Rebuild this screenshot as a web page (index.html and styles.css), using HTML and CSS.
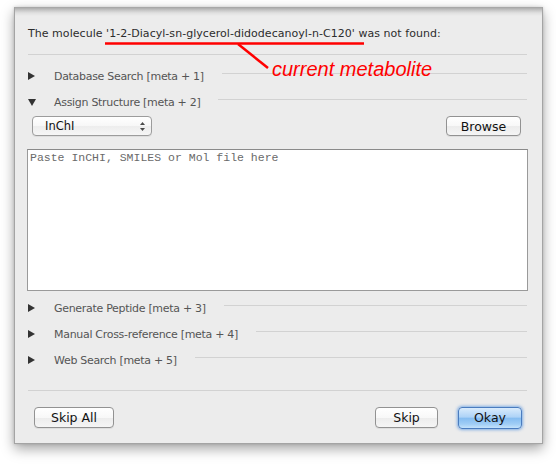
FILE: index.html
```html
<!DOCTYPE html>
<html lang="en">
<head>
<meta charset="utf-8">
<title>Molecule not found</title>
<link rel="stylesheet" href="styles.css">
</head>
<body>
<div class="sheet">
  <p class="msg">The molecule '1-2-Diacyl-sn-glycerol-didodecanoyl-n-C120' was not found:</p>
  <div class="sep sep-top"></div>

  <div class="sections">
    <div class="row">
      <span class="tri"><svg width="7" height="8" viewBox="0 0 7 8"><polygon points="0,0 7,4 0,8" /></svg></span>
      <span class="label">Database Search [meta + 1]</span>
      <span class="rule"></span>
    </div>
    <div class="row">
      <span class="tri"><svg width="8" height="7" viewBox="0 0 8 7"><polygon points="0,0 8,0 4,7" /></svg></span>
      <span class="label">Assign Structure [meta + 2]</span>
      <span class="rule"></span>
    </div>
  </div>

  <div class="tools">
    <div class="combo">
      <span class="combo-text">InChI</span>
      <svg class="combo-arrows" width="5" height="9" viewBox="0 0 5 9"><polygon points="2.5,0 5,3 0,3" /><polygon points="0,6 5,6 2.5,9" /></svg>
    </div>
    <button class="btn browse">Browse</button>
  </div>
  <div class="input">Paste InCHI, SMILES or Mol file here</div>

  <div class="sections lower">
    <div class="row">
      <span class="tri"><svg width="7" height="8" viewBox="0 0 7 8"><polygon points="0,0 7,4 0,8" /></svg></span>
      <span class="label">Generate Peptide [meta + 3]</span>
      <span class="rule"></span>
    </div>
    <div class="row">
      <span class="tri"><svg width="7" height="8" viewBox="0 0 7 8"><polygon points="0,0 7,4 0,8" /></svg></span>
      <span class="label">Manual Cross-reference [meta + 4]</span>
      <span class="rule"></span>
    </div>
    <div class="row">
      <span class="tri"><svg width="7" height="8" viewBox="0 0 7 8"><polygon points="0,0 7,4 0,8" /></svg></span>
      <span class="label">Web Search [meta + 5]</span>
      <span class="rule"></span>
    </div>
  </div>

  <div class="sep sep-bottom"></div>
  <div class="buttons">
    <button class="btn skip-all">Skip All</button>
    <span class="spacer"></span>
    <button class="btn skip">Skip</button>
    <button class="btn okay">Okay</button>
  </div>

  <svg class="annot-lines" width="400" height="70" viewBox="0 0 400 70">
    <line x1="90" y1="36.5" x2="349" y2="36.5" />
    <line x1="223" y1="37" x2="253" y2="61" />
  </svg>
  <span class="annot-text">current metabolite</span>
</div>
</body>
</html>
```

FILE: styles.css
```css
html, body {
  margin: 0;
  padding: 0;
  background: #ffffff;
}

body {
  width: 556px;
  height: 464px;
  overflow: hidden;
  font-family: "DejaVu Sans", "Liberation Sans", sans-serif;
}

.sheet {
  position: relative;
  box-sizing: border-box;
  width: 529px;
  height: 437px;
  margin: 7px 0 0 14px;
  padding: 19px 15px 15px 13px;
  border: 1px solid #a4a4a4;
  border-top: none;
  background: linear-gradient(to bottom, #a2a2a2 0, #c4c4c4 3px, #e0e0e0 6px, #ececec 9px, #ececec 100%);
  box-shadow: 0 5px 12px rgba(0, 0, 0, 0.35), 0 0 3px rgba(0, 0, 0, 0.15);
}

.msg {
  margin: 0;
  font-size: 11px;
  line-height: 16px;
  letter-spacing: 0.04px;
  color: #2c2c2c;
  white-space: nowrap;
}

.sep {
  height: 1px;
  background: #d2d2d2;
}

.sep-top {
  margin-top: 12px;
}

.sections {
  margin-top: 8px;
}

.sections.lower {
  margin-top: 4px;
}

.row {
  display: flex;
  align-items: center;
  height: 26px;
}

.tri {
  width: 26px;
  display: flex;
  align-items: center;
}

.tri svg {
  display: block;
  fill: #333333;
}

.label {
  font-size: 11px;
  letter-spacing: -0.3px;
  color: #555555;
  white-space: nowrap;
}

.rule {
  flex: 1;
  height: 1px;
  margin: 0 0 6px 18px;
  background: #d2d2d2;
}

.tools {
  display: flex;
  justify-content: space-between;
  align-items: center;
  margin-top: 1px;
  height: 20px;
  padding: 0 6px 0 4px;
}

.combo {
  box-sizing: border-box;
  width: 120px;
  height: 20px;
  display: flex;
  align-items: center;
  justify-content: space-between;
  padding: 0 6px 0 12px;
  border: 1px solid #9c9c9c;
  border-radius: 4px;
  background: linear-gradient(to bottom, #ffffff 0, #f7f7f7 50%, #ededed 51%, #f6f6f6 100%);
  box-shadow: 0 1px 0 rgba(0, 0, 0, 0.06);
}

.combo-text {
  font-size: 11.5px;
  color: #111111;
}

.combo-arrows {
  display: block;
  fill: #4a4a4a;
}

.btn {
  box-sizing: border-box;
  height: 21px;
  padding: 0;
  font-family: "DejaVu Sans", "Liberation Sans", sans-serif;
  font-size: 12.5px;
  color: #111111;
  border: 1px solid #929292;
  border-radius: 4px;
  background: linear-gradient(to bottom, #ffffff 0, #f8f8f8 50%, #ececec 51%, #f5f5f5 100%);
  box-shadow: 0 1px 0 rgba(0, 0, 0, 0.06);
}

.browse {
  width: 75px;
  height: 20px;
}

.input {
  box-sizing: border-box;
  height: 142px;
  margin: 13px -1px 0 -1px;
  padding: 1px 2px;
  border: 1px solid #9a9a9a;
  border-top-color: #8a8a8a;
  background: #ffffff;
  font-family: "Liberation Mono", "DejaVu Sans Mono", monospace;
  font-size: 11.5px;
  line-height: 14px;
  color: #6a6a6a;
  white-space: nowrap;
}

.sep-bottom {
  margin-top: 17px;
}

.buttons {
  display: flex;
  align-items: center;
  margin-top: 16px;
  height: 21px;
  padding: 0 5px 0 6px;
}

.spacer {
  flex: 1;
}

.skip-all {
  width: 80px;
}

.skip {
  width: 63px;
  margin-right: 20px;
}

.okay {
  width: 64px;
  height: 22px;
  border-color: #4a7cbf;
  background: linear-gradient(to bottom, #d9ebfc 0, #aed3f7 45%, #86bdf1 52%, #9fcdf6 80%, #c4e3fc 100%);
  box-shadow: 0 0 3px 1px rgba(70, 140, 225, 0.65);
}

.annot-lines {
  position: absolute;
  left: 0;
  top: 0;
  stroke: #ff0000;
  stroke-width: 2.5;
  pointer-events: none;
}

.annot-text {
  position: absolute;
  left: 257px;
  top: 52px;
  font-family: "Liberation Sans", Arial, sans-serif;
  font-style: italic;
  font-size: 20px;
  line-height: 20px;
  color: #ff0000;
  white-space: nowrap;
}
```
